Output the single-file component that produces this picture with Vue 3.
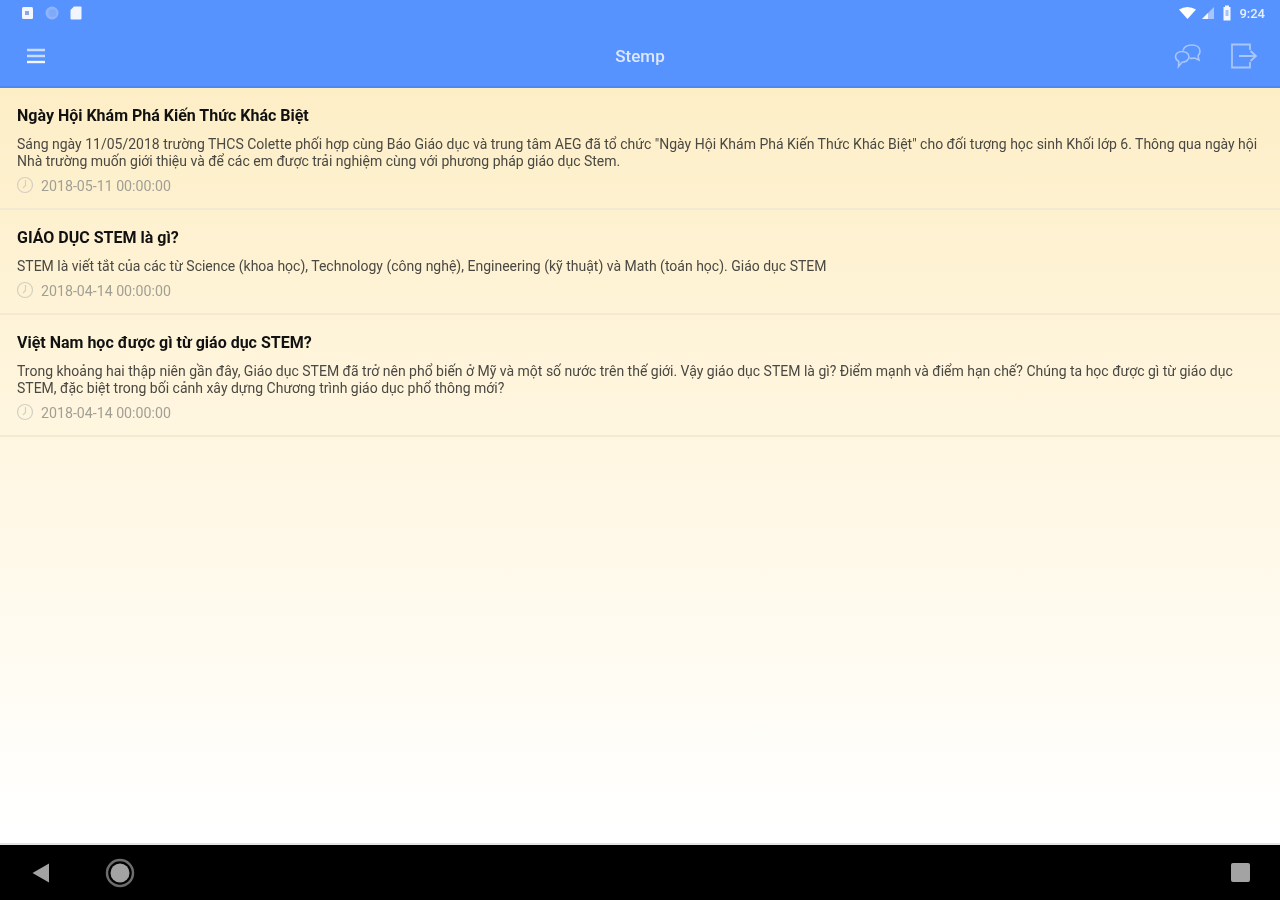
<script setup>
import { ref } from 'vue'

const posts = ref([
  {
    title: 'Ngày Hội Khám Phá Kiến Thức Khác Biệt',
    text: 'Sáng ngày 11/05/2018 trường THCS Colette phối hợp cùng Báo Giáo dục và trung tâm AEG đã tổ chức "Ngày Hội Khám Phá Kiến Thức Khác Biệt" cho đối tượng học sinh Khối lớp 6. Thông qua ngày hội Nhà trường muốn giới thiệu và để các em được trải nghiệm cùng với phương pháp giáo dục Stem.',
    date: '2018-05-11 00:00:00'
  },
  {
    title: 'GIÁO DỤC STEM là gì?',
    text: 'STEM là viết tắt của các từ Science (khoa học), Technology (công nghệ), Engineering (kỹ thuật) và Math (toán học). Giáo dục STEM',
    date: '2018-04-14 00:00:00'
  },
  {
    title: 'Việt Nam học được gì từ giáo dục STEM?',
    text: 'Trong khoảng hai thập niên gần đây, Giáo dục STEM đã trở nên phổ biến ở Mỹ và một số nước trên thế giới. Vậy giáo dục STEM là gì? Điểm mạnh và điểm hạn chế? Chúng ta học được gì từ giáo dục STEM, đặc biệt trong bối cảnh xây dựng Chương trình giáo dục phổ thông mới?',
    date: '2018-04-14 00:00:00'
  }
])
</script>

<template>
  <div class="screen">
    <header class="top">
      <div class="status">
        <div class="status-left">
          <svg width="14" height="14" viewBox="0 0 14 14"><rect x="1" y="1" width="11" height="12" rx="1.500" fill="#f4f7ff"/><rect x="4" y="5" width="4" height="4" fill="#8aa9e0"/></svg>
          <svg width="16" height="16" viewBox="0 0 16 16"><circle cx="8" cy="8" r="6.500" fill="#8fb4fb"/><circle cx="8.500" cy="8" r="4" fill="#7fa9fb"/></svg>
          <svg width="14" height="16" viewBox="0 0 14 16"><path d="M5 1.500h6.500a1 1 0 0 1 1 1v11a1 1 0 0 1-1 1h-9a1 1 0 0 1-1-1V5z" fill="#f1f5ff"/></svg>
        </div>
        <div class="status-right">
          <svg width="20" height="14" viewBox="0 0 20 14"><path d="M1 3.500Q9.500-1.500 18 3.500L9.500 13z" fill="#fff"/></svg>
          <svg width="14" height="14" viewBox="0 0 14 14"><path d="M13 1v12H1z" fill="#a9c4fb"/><path d="M7 7v6H1z" fill="#f4f7ff"/></svg>
          <svg class="batt" width="10" height="16" viewBox="0 0 10 16"><path d="M3 .5h4v1.500h1.500v13.500h-7V2H3z" fill="#f4f7ff"/><rect x="3.500" y="5" width="3" height="6" fill="#a9c4fb"/></svg>
          <span class="time">9:24</span>
        </div>
      </div>
      <div class="bar">
        <button class="icon-btn menu">
          <svg width="20" height="16" viewBox="0 0 20 16"><path d="M1 2h18M1 8h18" stroke="#c9dbff" stroke-width="2.400"/><path d="M1 14h18" stroke="#f4f7ff" stroke-width="2.400"/></svg>
        </button>
        <span class="title">Stemp</span>
        <div class="actions">
          <svg width="28" height="26" viewBox="0 0 28 26" fill="none" stroke="#a9c6fb" stroke-width="1.600"><path d="M9 7.500C10 3.500 14 2 18 2c4.500 0 8 2.200 8 6 0 2.300-.8 3.800-2 5l1 4-4.500-2c-1.500.4-3.500.5-5 .2"/><path d="M8 8.500c3.600 0 7 2 7 5.300s-3.400 5.400-7 5.400L4.500 23.500l.3-5C3 17.500 1.500 16 1.500 13.800 1.500 10.500 4.500 8.500 8 8.500z"/></svg>
          <svg width="28" height="26" viewBox="0 0 28 26" fill="none" stroke="#a9c6fb" stroke-width="1.800"><path d="M20 7V1.500H2v23h18V19"/><path d="M9 13h16.500M20.500 8l5.500 5-5.500 5"/></svg>
        </div>
      </div>
    </header>

    <main class="content">
      <article v-for="post in posts" :key="post.title" class="post">
        <h2>{{ post.title }}</h2>
        <p>{{ post.text }}</p>
        <div class="date">
          <svg width="18" height="18" viewBox="0 0 18 18" fill="none" stroke="#d2cfc4" stroke-width="1.200"><circle cx="9" cy="9" r="7.500"/><path d="M9.500 4v5.500L7 12"/></svg>
          <span>{{ post.date }}</span>
        </div>
      </article>
    </main>

    <footer class="nav">
      <svg class="back" width="20" height="22" viewBox="0 0 20 22"><path d="M18 1.500v19L1.500 11z" fill="#a3a3a3"/></svg>
      <svg class="home" width="30" height="30" viewBox="0 0 30 30"><circle cx="15" cy="15" r="13" fill="none" stroke="#6c6c6c" stroke-width="2.500"/><circle cx="15" cy="15" r="9.500" fill="#a3a3a3"/></svg>
      <span class="recent"></span>
    </footer>
  </div>
</template>

<style>
html, body {
  margin: 0;
  background: #fff;
}
</style>

<style scoped>
.screen {
  display: flex;
  flex-direction: column;
  width: 1280px;
  height: 900px;
  overflow: hidden;
  font-family: Roboto, "Liberation Sans", sans-serif;
  filter: blur(0.5px);
}
.top {
  flex: none;
  height: 88px;
  background: #5693ff;
  box-shadow: inset 0 -2px 0 #4b88f0;
  color: #fff;
}
.status {
  display: flex;
  justify-content: space-between;
  align-items: center;
  height: 26px;
  padding: 0 15px 0 21px;
}
.status-left, .status-right {
  display: flex;
  align-items: center;
}
.status-left {
  gap: 9px;
}
.status-right {
  gap: 3px;
}
.batt {
  margin-left: 4px;
}
.time {
  margin-left: 4px;
  font-size: 13px;
  font-weight: 500;
  color: #e8efff;
}
.bar {
  position: relative;
  display: flex;
  justify-content: space-between;
  align-items: center;
  height: 60px;
  padding: 0 22px 0 26px;
}
.icon-btn {
  padding: 0;
  border: 0;
  background: none;
  display: flex;
}
.title {
  position: absolute;
  left: 0;
  right: 0;
  text-align: center;
  font-size: 17px;
  font-weight: 500;
  color: #dde8ff;
  pointer-events: none;
}
.actions {
  display: flex;
  gap: 28px;
  align-items: center;
}
.content {
  flex: 1;
  background: linear-gradient(#fdeec6 0%, #fff6e0 45%, #ffffff 98%);
  border-bottom: 2px solid #e4e4e2;
}
.post {
  padding: 19px 17px 12px;
  border-bottom: 2px solid #f3ead4;
}
.post h2 {
  margin: 0 0 11px;
  font-size: 16px;
  line-height: 18px;
  font-weight: 700;
  color: #111;
}
.post p {
  margin: 0 0 6px;
  font-size: 14px;
  line-height: 17px;
  color: #4a4842;
}
.date {
  display: flex;
  align-items: center;
  gap: 7px;
  font-size: 14.200px;
  line-height: 18px;
  color: #a19e94;
}
.date svg {
  margin-left: -1px;
  margin-bottom: 2px;
}
.nav {
  flex: none;
  display: flex;
  align-items: center;
  height: 55px;
  background: #000;
  padding: 0 30px 0 31px;
}
.home {
  margin-left: 54px;
}
.recent {
  width: 19px;
  height: 19px;
  margin-left: auto;
  border-radius: 2px;
  background: #a3a3a3;
}
</style>
